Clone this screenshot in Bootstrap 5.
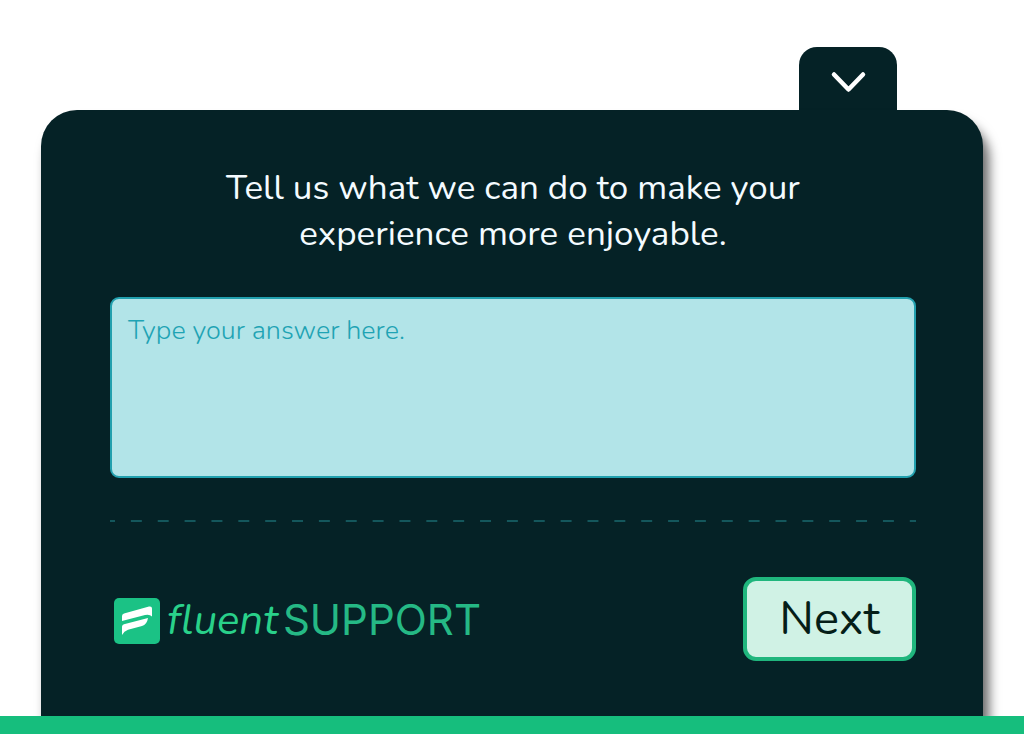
<!DOCTYPE html>
<html lang="en">
<head>
<meta charset="utf-8">
<meta name="viewport" content="width=device-width, initial-scale=1">
<title>Fluent Support survey</title>
<link href="https://cdn.jsdelivr.net/npm/bootstrap@5.3.0/dist/css/bootstrap.min.css" rel="stylesheet">
<style>
body { font-family: Nunito, "Open Sans", sans-serif; background: #fff; }
.survey-page { padding-top: 47px; }
.survey-wrap { margin: 0 41px; }
.toggle-tab { width: 98px; height: 63px; margin-right: 86px; padding: 8px 0 0 2px; border: 0; border-radius: 18px 18px 0 0; background: #052226; }
.survey-panel { padding: 55px 67px 48px 69px; border-radius: 36px 36px 0 0; background: #052226; box-shadow: 6px 12px 12px rgba(0,0,0,.6); }
.question { margin-bottom: 40px; font-size: 35px; line-height: 46px; color: #f4fbff; font-weight: 400; }
.answer { height: 181px; padding: 14px 16px; resize: none; font-size: 27px; line-height: 36px; font-weight: 300; border: 2px solid #22a0ae; border-radius: 9px; background: #b2e4e8; }
.answer:focus { background: #b2e4e8; border-color: #22a0ae; }
.answer::placeholder { color: #1fa3b4; }
.dashes { height: 2px; margin: 42px 0 55px; background: linear-gradient(90deg, #14575c 5px, transparent 5px calc(100% - 6px), #14575c calc(100% - 6px)) 0 0 / 27px 2px round; }
.brand { padding: 4px 0 0 4px; color: #29d18a; line-height: 60px; }
.brand-first { font-style: italic; font-weight: 400; font-size: 42px; margin-left: 7px; }
.brand-second { font-family: Inter, sans-serif; font-weight: 400; font-size: 42px; margin-left: 5px; padding-bottom: 2px; color: #25b985; }
.next-btn { width: 173px; height: 84px; padding: 0; border: 4px solid #20b67d; border-radius: 13px; background: #d0f2e5; color: #051e18; font-size: 47px; line-height: 76px; font-weight: 400; }
.page-foot { height: 18px; background: #16be7d; }
</style>
</head>
<body>
<div class="survey-page min-vh-100 d-flex flex-column">
  <main class="survey-wrap flex-grow-1 d-flex flex-column">
    <button type="button" class="toggle-tab align-self-end d-flex justify-content-center" aria-label="Collapse survey">
      <svg width="40" height="52" viewBox="0 0 40 52" fill="none" stroke="#fff" stroke-width="4.500" stroke-linecap="round" stroke-linejoin="round" aria-hidden="true"><path d="M5 19.500L19.500 34.500L34 19.500"/></svg>
    </button>
    <form class="survey-panel flex-grow-1" onsubmit="return false">
      <label for="answer" class="question d-block text-center">Tell us what we can do to make your<br>experience more enjoyable.</label>
      <textarea id="answer" class="answer form-control" placeholder="Type your answer here."></textarea>
      <div class="dashes"></div>
      <div class="d-flex justify-content-between align-items-center">
        <div class="brand d-flex align-items-center">
          <svg width="46" height="46" viewBox="0 0 46 46" aria-hidden="true"><rect width="46" height="46" rx="5" fill="#1bc285"/><path fill="#fff" d="M8 18Q8 16 10 15.400L35 8.600Q38 8 38 10.500V18.500Q35.500 15.800 31 17L8 23ZM8 28.500Q8.300 26.800 10 26.300L34 20Q33 26.500 28 28L14 31.700Q10 33 8 37Z"/></svg>
          <span class="brand-first">fluent</span><span class="brand-second">SUPPORT</span>
        </div>
        <button type="submit" class="next-btn btn">Next</button>
      </div>
    </form>
  </main>
  <footer class="page-foot position-relative"></footer>
</div>
<script src="https://cdn.jsdelivr.net/npm/bootstrap@5.3.0/dist/js/bootstrap.bundle.min.js"></script>
</body>
</html>
